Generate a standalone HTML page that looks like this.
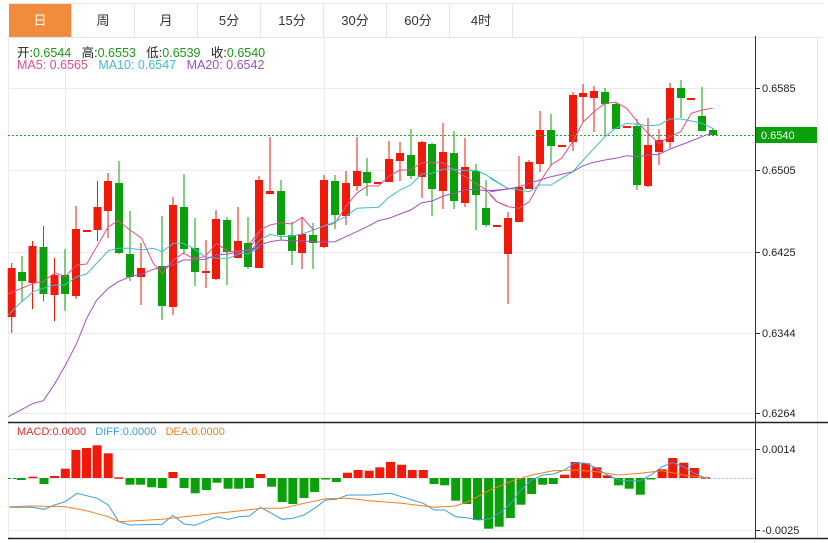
<!DOCTYPE html>
<html><head><meta charset="utf-8"><style>
body{margin:0;background:#fff;width:828px;height:543px;overflow:hidden;font-family:"Liberation Sans","Noto Sans CJK SC",sans-serif;position:relative}
.tabs{position:absolute;top:3px;left:9px;height:33px;display:flex;border-top:1px solid #e2e6ea;border-bottom:1px solid #e2e6ea}
.tab{width:62px;border-right:1px solid #e2e6ea;text-align:center;line-height:33px;font-size:13px;color:#333}
.tab.on{background:#f28b3c;color:#fff}
.lg{position:absolute;left:17px;font-size:12.5px;white-space:nowrap}
</style></head><body>
<div class="tabs"><div class="tab on">日</div><div class="tab">周</div><div class="tab">月</div><div class="tab">5分</div><div class="tab">15分</div><div class="tab">30分</div><div class="tab">60分</div><div class="tab">4时</div><div class="tab" style="width:310px;border-right:none"></div></div>
<svg id="s" width="828" height="543" style="position:absolute;left:0;top:0"></svg>
<div class="lg" style="top:42px;color:#222">开:<span style="color:#1a9a1a">0.6544</span>&nbsp;&nbsp;&nbsp;高:<span style="color:#1a9a1a">0.6553</span>&nbsp;&nbsp;&nbsp;低:<span style="color:#1a9a1a">0.6539</span>&nbsp;&nbsp;&nbsp;收:<span style="color:#1a9a1a">0.6540</span></div>
<div class="lg" style="top:58px"><span style="color:#e0508a">MA5: 0.6565</span>&nbsp;&nbsp;&nbsp;<span style="color:#3fbcd2">MA10: 0.6547</span>&nbsp;&nbsp;&nbsp;<span style="color:#a050c0">MA20: 0.6542</span></div>
<div class="lg" style="top:426px;font-size:11px"><span style="color:#e03030">MACD:0.0000</span>&nbsp;&nbsp;&nbsp;<span style="color:#3a9ee0">DIFF:0.0000</span>&nbsp;&nbsp;&nbsp;<span style="color:#f08020">DEA:0.0000</span></div>
<script>
var s=document.getElementById('s'),h='';
function L(x1,y1,x2,y2,c,w,d){h+='<line x1="'+x1+'" y1="'+y1+'" x2="'+x2+'" y2="'+y2+'" stroke="'+c+'" stroke-width="'+(w||1)+'"'+(d?' stroke-dasharray="'+d+'"':'')+'/>';}
function T(x,y,t,c,sz){h+='<text x="'+x+'" y="'+y+'" font-size="'+(sz||11)+'" fill="'+(c||'#222')+'" font-family="Liberation Sans,sans-serif">'+t+'</text>';}
[88,170,252,333,413,449,478,530].forEach(function(y){L(8,y+.5,755,y+.5,'#e6ecf0');});
[65,324,583].forEach(function(x){L(x+.5,36,x+.5,539,'#e6ecf0');});
L(8.5,36,8.5,539,'#e6ecf0');
L(755.5,36,755.5,539,'#333');L(817.5,36,817.5,539,'#e2e6ea');
L(8,422.5,828,422.5,'#222',1.5);L(8,538.5,828,538.5,'#222',1.5);
[[88,'0.6585'],[170,'0.6505'],[252,'0.6425'],[333,'0.6344'],[413,'0.6264'],[449,'0.0014'],[530,'-0.0025']].forEach(function(a){L(755,a[0]+.5,760,a[0]+.5,'#333');T(762,a[0]+4,a[1]);});
var R='#f01a0a',G='#0aa00a';
var c=[[11.7,268,317,263,333,R],[22,272,281,256,302,G],[32.5,246,283,241,309,R],[43.5,247,294,226,301,G],[54.5,275,295,258,321,R],[65,275,294,249,311,G],[76,229,296,206,299,R],[87,230,232,230,232,R],[97.5,207,230,181,241,R],[108,181,211,173,238,R],[119,183,253,161,254,G],[130,254,277,211,281,G],[141,268,277,243,305,R],[162,266,306,216,320,G],[173,205,307,197,315,R],[184,207,249,174,254,G],[195,248,272,218,286,G],[206,271,273,240,288,R],[216,219,279,210,280,R],[227,220,252,217,285,G],[238,241,258,207,258,R],[248,243,267,217,269,G],[259,180,268,176,268,R],[270,191,194,137,194,R],[281,191,235,180,240,G],[292,235,251,222,265,G],[302,234,253,217,269,R],[313,235,243,223,269,G],[324,180,247,175,248,R],[335,181,215,175,229,G],[346,183,216,171,225,R],[357,171,186,137,191,R],[367,172,183,158,196,G],[378,182,184,182,184,R],[389,159,182,141,182,R],[400,153,161,142,181,R],[411,155,176,129,179,G],[422,142,177,141,198,R],[432,144,189,143,216,G],[443,152,191,123,209,R],[454,153,201,131,209,G],[465,167,203,138,207,R],[476,171,195,164,230,G],[486,208,225,180,227,G],[497,225,227,225,227,R],[508,218,254,212,304,R],[519,187,222,156,222,R],[529,162,189,160,189,R],[540,130,164,111,172,R],[551,130,146,114,166,G],[562,145,147,145,147,R],[573,95,142,92,151,R],[583,93,97,84,122,R],[594,91,98,86,132,R],[605,92,104,88,137,G],[616,104,129,102,129,G],[627,126,128,126,128,R],[637,126,185,119,190,G],[648,145,186,118,187,R],[659,140,152,129,165,R],[670,88,142,83,148,R],[681,88,98,80,118,G],[691,98,100,98,100,R],[702,116,131,87,131,G],[713,130,135,128,135,G]];
c.forEach(function(k){L(k[0],k[3],k[0],k[4],k[5]);h+='<rect x="'+(k[0]-4)+'" y="'+k[1]+'" width="8" height="'+Math.max(2,k[2]-k[1])+'" fill="'+k[5]+'"/>';});
function P(pts,ox,oy,sx,sy,col,w){h+='<polyline fill="none" stroke="'+col+'" stroke-width="'+(w||1)+'" points="'+pts.map(function(p){return (ox+p[0]/sx).toFixed(1)+','+(oy+p[1]/sy).toFixed(1)}).join(' ')+'"/>';}
var pk='#e0508a',cy='#3fbcd2',pu='#a050c0';
P([[25,492],[100,460],[130,455],[165,428],[195,440],[230,405],[260,402],[290,350],[325,290],[355,272],[390,300],[425,325],[460,400],[487,430],[520,390],[550,370],[580,385],[615,380],[650,340],[685,365],[720,362],[745,362],[780,305]],0,130,3,3,pk);
P([[0,370],[30,330],[60,315],[92,308],[125,312],[157,292],[190,330],[222,318],[255,310],[287,260],[320,220],[352,198],[385,198],[417,168],[450,150],[482,150],[515,128],[547,128],[580,128],[612,150],[645,170],[677,190],[709,210],[741,245],[772,258]],250,120,3,3,pk);
P([[0,360],[20,380],[53,395],[87,400],[118,380],[150,320],[183,270],[215,250],[248,200],[280,140],[312,110],[345,85],[377,82],[410,100],[442,140],[474,175],[507,205],[540,185],[572,170],[604,115],[636,105],[668,100]],490,75,3,3,pk);
P([[25,555],[60,520],[100,485],[130,475],[165,465],[195,465],[230,440],[260,432],[290,400],[325,362],[355,355],[390,355],[425,360],[460,355],[487,365],[520,340],[550,340],[580,355],[615,380],[650,385],[685,385],[720,370],[745,372],[780,350]],0,130,3,3,cy);
P([[0,395],[30,360],[60,343],[92,350],[125,348],[157,342],[190,330],[222,318],[255,305],[287,290],[320,265],[352,263],[385,262],[417,232],[450,210],[482,195],[515,162],[547,160],[580,148],[612,148],[645,152],[677,150],[709,165],[741,185],[772,205]],250,120,3,3,cy);
P([[0,310],[53,340],[87,345],[118,350],[150,330],[183,330],[215,310],[248,290],[280,255],[312,220],[345,185],[377,160],[410,145],[442,148],[474,152],[507,150],[540,132],[572,132],[604,138],[636,145],[668,160]],490,75,3,3,cy);
P([[25,860],[100,820],[130,812],[165,760],[195,708],[230,640],[260,565],[290,510],[325,475],[355,455],[390,440],[425,432],[460,418],[487,412],[520,405],[550,390],[580,390],[615,388],[650,375],[685,372],[720,365],[780,350]],0,130,3,3,pu);
P([[0,395],[30,375],[60,365],[92,360],[125,362],[157,362],[190,365],[222,366],[255,365],[287,350],[320,335],[352,320],[385,302],[417,295],[450,282],[482,270],[515,248],[547,243],[580,228],[612,220],[645,210],[677,208],[709,212],[741,210],[772,207]],250,120,3,3,pu);
P([[0,350],[53,342],[87,335],[118,325],[150,315],[183,305],[215,298],[248,290],[280,272],[312,262],[345,255],[377,250],[410,242],[442,245],[474,240],[507,238],[540,222],[572,210],[604,198],[636,185],[668,172]],490,75,3,3,pu);
L(8,135.5,755,135.5,'#22aa22',1,'2,2');
h+='<rect x="756" y="127" width="61" height="16" fill="#0aa00a"/>';T(761,139,'0.6540','#fff');
var b=[[40,240],[62,230],[83,252],[103,228],[123,206],[143,150],[163,144],[183,136],[204,160],[224,232],[245,254],[265,254],[286,262],[306,264],[326,216],[347,264],[368,280],[389,270],[409,248],[430,266],[450,266],[470,264],[491,222],[512,260],[532,306],[552,312],[573,294],[593,276],[614,236],[634,246],[655,218],[675,210],[696,212],[716,202],[736,186],[757,194],[777,210],[798,210],[818,252],[838,256],[859,302],[880,312],[900,360],[921,386],[941,380],[962,354],[982,314],[1002,282],[1023,254],[1043,252],[1064,224],[1084,186],[1104,190],[1125,202],[1145,226],[1166,256],[1186,266],[1207,284],[1227,236],[1248,208],[1268,174],[1289,188],[1309,204],[1330,232]];
b.forEach(function(q){var x=q[0]/1.885,y=400+q[1]/3,z=478,col=y<z?R:G;var t=Math.min(y,z),hh=Math.max(1.5,Math.abs(y-z));h+='<rect x="'+(x-4.5).toFixed(1)+'" y="'+t.toFixed(1)+'" width="9" height="'+hh.toFixed(1)+'" fill="'+col+'"/>';});
L(8,478.5,20,478.5,G,1,'3,2');L(706,478.5,755,478.5,'#a8d0e8',1,'2,2');
P([[18,322],[60,322],[83,328],[103,315],[123,305],[145,280],[183,295],[204,315],[224,365],[245,375],[306,373],[326,346],[347,372],[368,376],[389,362],[409,350],[430,358],[450,350],[470,348],[491,322],[512,340],[532,358],[552,355],[573,345],[593,325],[614,300],[634,298],[655,285],[696,285],[736,280],[757,290],[798,310],[818,330],[838,330],[859,350],[880,353],[900,360],[921,358],[941,340],[962,312],[982,270],[1002,240],[1023,225],[1043,222],[1064,210],[1084,188],[1104,190],[1125,205],[1145,225],[1166,240],[1186,242],[1207,242],[1227,225],[1248,200],[1268,188],[1289,200],[1309,220],[1330,234]],0,400,1.885,3,'#3a9ee0');
P([[18,320],[60,318],[123,320],[163,332],[204,350],[224,365],[306,358],[347,350],[409,340],[450,333],[491,325],[532,325],[573,310],[614,296],[655,295],[696,302],[757,310],[818,322],[859,318],[880,306],[900,290],[921,272],[962,245],[1002,225],[1043,212],[1084,210],[1125,215],[1166,225],[1207,220],[1248,212],[1289,225],[1330,234]],0,400,1.885,3,'#f08020');
s.innerHTML=h;
</script>
</body></html>
